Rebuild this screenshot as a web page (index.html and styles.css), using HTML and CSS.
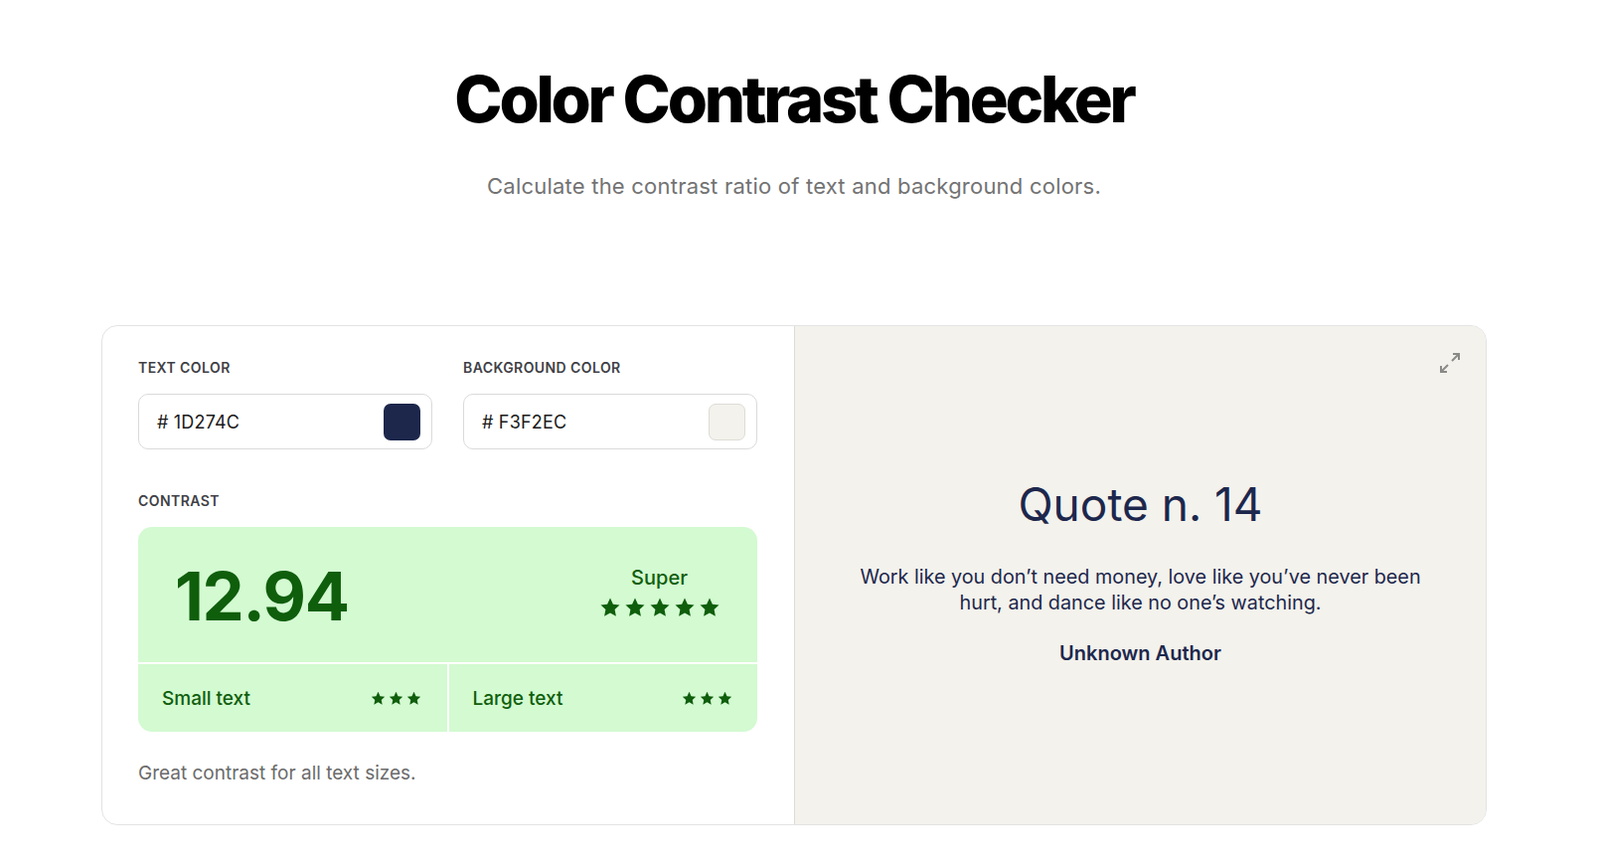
FILE: index.html
```html
<!DOCTYPE html>
<html lang="en">

<head>
    <meta charset="UTF-8">
    <meta name="viewport" content="width=device-width, initial-scale=1.0">
    <title>Color Contrast Checker</title>
    <link rel="stylesheet" href="styles.css">
</head>

<body>
    <main class="page">
        <header class="hero">
            <h1>Color Contrast Checker</h1>
            <p class="subtitle">Calculate the contrast ratio of text and background colors.</p>
        </header>

        <section class="checker">
            <div class="controls">
                <div class="fields">
                    <div class="field">
                        <label class="label">TEXT COLOR</label>
                        <div class="color-input">
                            <span class="hex"># 1D274C</span>
                            <span class="swatch swatch-dark"></span>
                        </div>
                    </div>
                    <div class="field">
                        <label class="label">BACKGROUND COLOR</label>
                        <div class="color-input">
                            <span class="hex"># F3F2EC</span>
                            <span class="swatch swatch-light"></span>
                        </div>
                    </div>
                </div>

                <p class="label contrast-label">CONTRAST</p>
                <div class="score">
                    <div class="score-main">
                        <span class="ratio">12.94</span>
                        <div class="rating">
                            <span class="rating-name">Super</span>
                            <div class="stars stars-big">
                                <svg viewBox="0 0 24 24"><path d="M12 2.5l2.9 6.2 6.6.8-4.9 4.6 1.3 6.6L12 17.4l-5.9 3.3 1.3-6.6-4.9-4.6 6.6-.8z"/></svg>
                                <svg viewBox="0 0 24 24"><path d="M12 2.5l2.9 6.2 6.6.8-4.9 4.6 1.3 6.6L12 17.4l-5.9 3.3 1.3-6.6-4.9-4.6 6.6-.8z"/></svg>
                                <svg viewBox="0 0 24 24"><path d="M12 2.5l2.9 6.2 6.6.8-4.9 4.6 1.3 6.6L12 17.4l-5.9 3.3 1.3-6.6-4.9-4.6 6.6-.8z"/></svg>
                                <svg viewBox="0 0 24 24"><path d="M12 2.5l2.9 6.2 6.6.8-4.9 4.6 1.3 6.6L12 17.4l-5.9 3.3 1.3-6.6-4.9-4.6 6.6-.8z"/></svg>
                                <svg viewBox="0 0 24 24"><path d="M12 2.5l2.9 6.2 6.6.8-4.9 4.6 1.3 6.6L12 17.4l-5.9 3.3 1.3-6.6-4.9-4.6 6.6-.8z"/></svg>
                            </div>
                        </div>
                    </div>
                    <div class="score-cell">
                        <span>Small text</span>
                        <div class="stars stars-small">
                            <svg viewBox="0 0 24 24"><path d="M12 2.5l2.9 6.2 6.6.8-4.9 4.6 1.3 6.6L12 17.4l-5.9 3.3 1.3-6.6-4.9-4.6 6.6-.8z"/></svg>
                            <svg viewBox="0 0 24 24"><path d="M12 2.5l2.9 6.2 6.6.8-4.9 4.6 1.3 6.6L12 17.4l-5.9 3.3 1.3-6.6-4.9-4.6 6.6-.8z"/></svg>
                            <svg viewBox="0 0 24 24"><path d="M12 2.5l2.9 6.2 6.6.8-4.9 4.6 1.3 6.6L12 17.4l-5.9 3.3 1.3-6.6-4.9-4.6 6.6-.8z"/></svg>
                        </div>
                    </div>
                    <div class="score-cell">
                        <span>Large text</span>
                        <div class="stars stars-small">
                            <svg viewBox="0 0 24 24"><path d="M12 2.5l2.9 6.2 6.6.8-4.9 4.6 1.3 6.6L12 17.4l-5.9 3.3 1.3-6.6-4.9-4.6 6.6-.8z"/></svg>
                            <svg viewBox="0 0 24 24"><path d="M12 2.5l2.9 6.2 6.6.8-4.9 4.6 1.3 6.6L12 17.4l-5.9 3.3 1.3-6.6-4.9-4.6 6.6-.8z"/></svg>
                            <svg viewBox="0 0 24 24"><path d="M12 2.5l2.9 6.2 6.6.8-4.9 4.6 1.3 6.6L12 17.4l-5.9 3.3 1.3-6.6-4.9-4.6 6.6-.8z"/></svg>
                        </div>
                    </div>
                </div>

                <p class="note">Great contrast for all text sizes.</p>
            </div>

            <div class="preview">
                <button class="expand" aria-label="Fullscreen">
                    <svg viewBox="0 0 24 24"><polyline points="15 3 21 3 21 9"/><polyline points="9 21 3 21 3 15"/><line x1="21" y1="3" x2="14" y2="10"/><line x1="3" y1="21" x2="10" y2="14"/></svg>
                </button>
                <h2 class="quote-title">Quote n. 14</h2>
                <p class="quote-text">Work like you don’t need money, love like you’ve never been hurt, and dance like no one’s watching.</p>
                <p class="quote-author">Unknown Author</p>
            </div>
        </section>
    </main>
</body>

</html>
```

FILE: styles.css
```css
* {
    margin: 0;
    padding: 0;
    box-sizing: border-box;
}

body {
    font-family: "Inter", "Noto Sans", sans-serif;
    background: #fff;
    color: #111;
    padding-right: 12px;
}

.page {
    max-width: 1394px;
    margin: 0 auto;
}

.hero {
    padding-top: 59px;
    text-align: center;
}

.hero h1 {
    font-size: 65px;
    line-height: 82px;
    font-weight: 800;
    letter-spacing: -0.05em;
    color: #000;
}

.subtitle {
    margin-top: 31px;
    font-size: 22px;
    line-height: 31px;
    letter-spacing: 0.01em;
    color: #737373;
}

.checker {
    margin-top: 124px;
    display: grid;
    grid-template-columns: 1fr 1fr;
    border: 1px solid #e3e3e3;
    border-radius: 16px;
    overflow: hidden;
    min-height: 503px;
}

/* left side */
.controls {
    padding: 34px 37px 38px 36px;
}

.fields {
    display: grid;
    grid-template-columns: 1fr 1fr;
    gap: 31px;
}

.label {
    display: block;
    font-size: 14px;
    line-height: 16px;
    font-weight: 600;
    letter-spacing: 0.03em;
    color: #3f3f46;
}

.color-input {
    margin-top: 18px;
    height: 56px;
    border: 1px solid #dadada;
    border-radius: 10px;
    display: flex;
    align-items: center;
    justify-content: space-between;
    padding: 0 11px 0 18px;
}

.hex {
    font-size: 18px;
    letter-spacing: 0.01em;
    color: #1a1a1a;
}

.swatch {
    width: 37px;
    height: 37px;
    border-radius: 7px;
}

.swatch-dark {
    background: #1d274c;
}

.swatch-light {
    background: #f3f2ec;
    border: 1px solid #dddcd6;
}

.contrast-label {
    margin-top: 44px;
}

.score {
    margin-top: 18px;
    display: grid;
    grid-template-columns: 1fr 1fr;
    gap: 2px;
    background: #fff;
    border-radius: 14px;
    overflow: hidden;
    color: #0f5e0c;
}

.score-main {
    grid-column: 1 / 3;
    height: 136px;
    background: #d3fad1;
    display: flex;
    align-items: center;
    justify-content: space-between;
    padding: 0 36px 0 37px;
}

.ratio {
    font-size: 67px;
    font-weight: 700;
    letter-spacing: -0.02em;
    line-height: 1;
    margin-top: 2px;
}

.rating {
    display: flex;
    flex-direction: column;
    align-items: center;
    gap: 6px;
    margin-bottom: 4px;
}

.rating-name {
    font-size: 20px;
    font-weight: 500;
    line-height: 24px;
}

.stars {
    display: flex;
}

.stars svg {
    fill: #0f5e0c;
}

.stars-big svg {
    width: 24px;
    height: 24px;
    margin: 0 0.5px;
}

.stars-small svg {
    width: 17px;
    height: 17px;
    margin: 0 0.5px;
}

.score-cell {
    height: 68px;
    background: #d3fad1;
    display: flex;
    align-items: center;
    justify-content: space-between;
    padding: 0 24px;
    font-size: 19px;
    font-weight: 500;
}

.note {
    margin-top: 28px;
    font-size: 19px;
    line-height: 27px;
    color: #6b6b6b;
}

/* right side */
.preview {
    position: relative;
    background: #f3f2ec;
    border-left: 1px solid #dedcd5;
    color: #1d274c;
    display: flex;
    flex-direction: column;
    align-items: center;
    justify-content: center;
    text-align: center;
    padding: 0 56px 8px;
}

.expand {
    position: absolute;
    top: 25px;
    right: 24px;
    width: 24px;
    height: 24px;
    border: none;
    background: none;
}

.expand svg {
    width: 24px;
    height: 24px;
    fill: none;
    stroke: #8a8a88;
    stroke-width: 2;
}

.quote-title {
    font-size: 46px;
    line-height: 58px;
    font-weight: 400;
}

.quote-text {
    margin-top: 31px;
    max-width: 580px;
    font-size: 19.8px;
    line-height: 26px;
}

.quote-author {
    margin-top: 24px;
    font-size: 20px;
    line-height: 28px;
    font-weight: 600;
}
```
